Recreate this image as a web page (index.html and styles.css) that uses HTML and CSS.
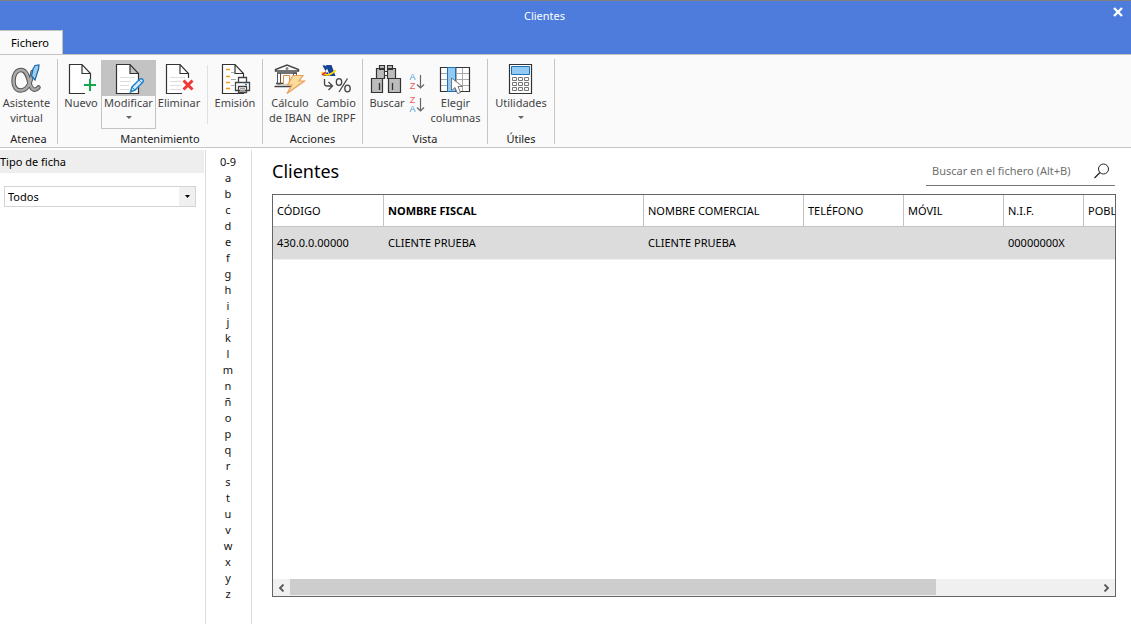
FILE: index.html
```html
<!DOCTYPE html>
<html lang="es">
<head>
<meta charset="utf-8">
<title>Clientes</title>
<link rel="stylesheet" href="styles.css">
</head>
<body>
<div class="window">
  <header class="titlebar">
    <h1 class="window-title">Clientes</h1>
    <button class="close" type="button" aria-label="Cerrar">
      <svg width="10" height="10" viewBox="0 0 10 10"><path d="M1 1l8 8M9 1l-8 8" stroke="#fff" stroke-width="2.4"/></svg>
    </button>
    <button class="tab" type="button">Fichero</button>
  </header>

  <nav class="ribbon" aria-label="Fichero">
    <section class="group">
      <div class="tools">
        <button class="tool wide" type="button">
          <svg width="32" height="32" viewBox="0 0 32 32">
            <g fill="none" stroke-linecap="round">
            <path d="M22.500 9C21 19 17.500 27.500 10.500 27.500C6 27.500 3.500 23.500 3.500 18C3.500 11.500 6.500 7 11 7C16.500 7 18 14 19.500 20C21 26 24.500 29 28.500 24.500" stroke="#555" stroke-width="4.500"/>
            <path d="M22.500 9C21 19 17.500 27.500 10.500 27.500C6 27.500 3.500 23.500 3.500 18C3.500 11.500 6.500 7 11 7C16.500 7 18 14 19.500 20C21 26 24.500 29 28.500 24.500" stroke="#aaa" stroke-width="2.500"/>
            </g>
            <path d="M23 6L25 2.500L29 2L28.500 6L25 17L21.500 13Z" fill="#9dcdf0" stroke="#1769a8" stroke-width="1.200"/>
          </svg>
          <span>Asistente<br>virtual</span>
        </button>
      </div>
      <h2 class="group-name">Atenea</h2>
    </section>

    <section class="group upkeep">
      <div class="tools">
        <button class="tool small" type="button">
          <svg width="32" height="32" viewBox="0 0 32 32">
            <path d="M25.500 17V10.500L17 1.500H4.500V30.500H20M17 1.500V10.500H25.500" fill="#fff" stroke="#333" stroke-width="1.200"/>
            <path d="M25 16v12M19 22h12" stroke="#12a84b" stroke-width="2"/>
          </svg>
          <span>Nuevo</span>
        </button>
        <button class="tool split selected" type="button">
          <svg width="32" height="32" viewBox="0 0 32 32">
            <path d="M3.500 1.500H17L25.500 10.500V30.500H3.500ZM17 1.500V10.500H25.500" fill="#fff" stroke="#333" stroke-width="1.200"/>
            <path d="M7 14.500h15M7 18.500h11M7 22.500h9M7 26.500h9" stroke="#ddd"/>
            <path d="M17.500 29L19 24L27 16Q29 15 30 17Q31 18 29.500 19.500L22 27Z" fill="#d7ecfa" stroke="#2384cb" stroke-width="1.500"/><path d="M19 24l3 3M26 17l3 3" stroke="#2384cb"/>
          </svg>
          <span>Modificar</span>
          <i class="arrow"></i>
        </button>
        <button class="tool medium" type="button">
          <svg width="32" height="32" viewBox="0 0 32 32">
            <path d="M25.500 15V10.500L17 1.500H3.500V30.500H19M17 1.500V10.500H25.500" fill="#fff" stroke="#333" stroke-width="1.200"/>
            <path d="M7 14.500h15M7 18.500h11M7 22.500h11M7 26.500h11" stroke="#ddd"/>
            <path d="M20.500 17.500l9 9M29.500 17.500l-9 9" stroke="#ee3937" stroke-width="3"/>
          </svg>
          <span>Eliminar</span>
        </button>
        <div class="divider"></div>
        <button class="tool medium" type="button">
          <svg width="32" height="32" viewBox="0 0 32 32">
            <path d="M3.500 1.500H16L24.500 10.500V30.500H3.500ZM16 1.500V10.500H24.500" fill="#fff" stroke="#333" stroke-width="1.200"/>
            <path d="M7 6.500h4M7 13.500h4M7 19.500h4M7 25.500h4" stroke="#f39a1d" stroke-width="1.500"/><path d="M12 9.500h3M12 16.500h5M12 22.500h3" stroke="#aaa"/>
            <path d="M16.500 19.500h14v8h-14zM19.500 14.500h8v5h-8zM19.500 23.500h8v6h-8z" fill="#fff" stroke="#444" stroke-width="1.300"/>
            <path d="M21 25.500h5M21 27.500h5" stroke="#999"/><path d="M26 21.500h2" stroke="#2384cb" stroke-width="1.500"/>
          </svg>
          <span>Emisión</span>
        </button>
      </div>
      <h2 class="group-name">Mantenimiento</h2>
    </section>

    <section class="group actions">
      <div class="tools">
        <button class="tool medium" type="button">
          <svg width="32" height="32" viewBox="0 0 32 32">
            <path d="M1.500 8V6.500L13 2L24.500 6.500V8Z" fill="#fff" stroke="#444" stroke-width="1.400"/><circle cx="13" cy="5.500" r="1.500" fill="#888"/>
            <path d="M3 10h20M2 20.500h17M0.500 23.500h17" stroke="#444" stroke-width="1.300"/>
            <path d="M3.500 10v11h3V10M19.500 14V10h3v4" fill="none" stroke="#555"/>
            <path d="M9.500 21V12.500h6V21" fill="#fff" stroke="#e58b38"/>
            <path d="M19 12.500H29L25 18H30.500L13 30.500L18 22H13.500Z" fill="#fbdc9c" stroke="#e8a05c" stroke-width="1.200"/>
          </svg>
          <span>Cálculo<br>de IBAN</span>
        </button>
        <button class="tool medium" type="button">
          <svg width="32" height="32" viewBox="0 0 32 32">
            <path d="M6 2H11.500L15.500 13H10L8 8ZM2.500 2.500Q6 1.500 7.500 5L5.500 8ZM3 13L7.500 9L9.500 13Z" fill="#164394"/>
            <path d="M1.500 9C5 14 12 12 15.500 7" fill="none" stroke="#ffd900" stroke-width="1.600"/><path d="M2 12L6 9" stroke="#e32c27" stroke-width="1.600"/>
            <path d="M4.500 16V20.500Q4.500 23 7 23H11.500M8.500 19L12.500 23L8.500 27" fill="none" stroke="#444" stroke-width="1.300"/>
            <g fill="none" stroke="#444" stroke-width="1.300"><ellipse cx="19" cy="19" rx="2.700" ry="3.300"/><ellipse cx="27.500" cy="25.500" rx="2.700" ry="3.300"/><path d="M27.500 15.500L19 29"/></g>
          </svg>
          <span>Cambio<br>de IRPF</span>
        </button>
      </div>
      <h2 class="group-name">Acciones</h2>
    </section>

    <section class="group view">
      <div class="tools">
        <button class="tool buscar" type="button">
          <svg width="32" height="32" viewBox="0 0 32 32">
            <path d="M9.500 2.500h5v4h-5zM17.500 2.500h5v4h-5zM6.500 5.500h8v10h-8zM17.500 5.500h8v10h-8zM1.500 15.500h11v14h-11zM18.500 15.500h12v14h-12z" fill="#bcbcbc" stroke="#333" stroke-width="1.200"/>
            <path d="M14.500 8.500h3v4h-3z" fill="#fff" stroke="#333"/><path d="M9.500 20v7M22.500 20v7" stroke="#333" stroke-width="1.300"/>
          </svg>
          <span>Buscar</span>
        </button>
        <div class="sorts">
          <button class="sort" type="button" aria-label="Orden ascendente">
            <span class="pair"><b class="blue">A</b><b class="red">Z</b></span>
            <svg width="9" height="18" viewBox="0 0 9 18"><path d="M4.500 2v13M1 11.500L4.500 15L8 11.500" fill="none" stroke="#666" stroke-width="1.200"/></svg>
          </button>
          <button class="sort" type="button" aria-label="Orden descendente">
            <span class="pair"><b class="red">Z</b><b class="blue">A</b></span>
            <svg width="9" height="18" viewBox="0 0 9 18"><path d="M4.500 2v13M1 11.500L4.500 15L8 11.500" fill="none" stroke="#666" stroke-width="1.200"/></svg>
          </button>
        </div>
        <button class="tool wide" type="button">
          <svg width="32" height="32" viewBox="0 0 32 32">
            <path d="M1.500 4.500h29v24h-29z" fill="#fff"/><path d="M2 10.500h28M2 16.500h28M2 22.500h28M17.500 5v23M23.500 5v23" stroke="#aaa"/>
            <path d="M1.500 4.500h29v24h-29z" fill="none" stroke="#333" stroke-width="1.200"/><path d="M8.500 4.500h8v24h-8z" fill="#92caf2" stroke="#1d72b8"/>
            <path d="M12.500 15V27.500L16 24.500L18.500 30.500L21.500 29.500L19 23.500H23.500Z" fill="#fff" stroke="#777"/>
          </svg>
          <span>Elegir<br>columnas</span>
        </button>
      </div>
      <h2 class="group-name">Vista</h2>
    </section>

    <section class="group">
      <div class="tools">
        <button class="tool utilities" type="button">
          <svg width="32" height="32" viewBox="0 0 32 32">
            <path d="M4.500 1.500h22v29h-22z" fill="#fff" stroke="#333" stroke-width="1.200"/><path d="M6.500 3.500h18v8h-18z" fill="#92caf2" stroke="#1d72b8"/>
            <path d="M7.500 14.500h4v3h-4zM13.500 14.500h4v3h-4zM19.500 14.500h4v3h-4zM7.500 19.500h4v3h-4zM13.500 19.500h4v3h-4zM19.500 19.500h4v3h-4zM7.500 24.500h4v3h-4zM13.500 24.500h4v3h-4zM19.500 24.500h4v3h-4z" fill="none" stroke="#777"/>
          </svg>
          <span>Utilidades</span>
          <i class="arrow"></i>
        </button>
      </div>
      <h2 class="group-name">Útiles</h2>
    </section>
  </nav>

  <div class="body">
    <aside class="filters">
      <label class="filter-label" for="tipo">Tipo de ficha</label>
      <div class="combo">
        <select id="tipo"><option>Todos</option></select>
        <span class="combo-arrow"><svg width="5" height="3" viewBox="0 0 5 3"><path d="M0 0h5L2.500 3z"/></svg></span>
      </div>
    </aside>
    <nav class="letters" aria-label="Índice">
      <a href="#0-9">0-9</a><a href="#a">a</a><a href="#b">b</a><a href="#c">c</a><a href="#d">d</a><a href="#e">e</a><a href="#f">f</a><a href="#g">g</a><a href="#h">h</a><a href="#i">i</a><a href="#j">j</a><a href="#k">k</a><a href="#l">l</a><a href="#m">m</a><a href="#n">n</a><a href="#ñ">ñ</a><a href="#o">o</a><a href="#p">p</a><a href="#q">q</a><a href="#r">r</a><a href="#s">s</a><a href="#t">t</a><a href="#u">u</a><a href="#v">v</a><a href="#w">w</a><a href="#x">x</a><a href="#y">y</a><a href="#z">z</a>
    </nav>
    <main class="content">
      <div class="content-head">
        <h2 class="content-title">Clientes</h2>
        <div class="search">
          <input type="text" placeholder="Buscar en el fichero (Alt+B)" aria-label="Buscar en el fichero">
          <button class="search-go" type="button" aria-label="Buscar">
            <svg width="16" height="16" viewBox="0 0 16 16"><circle cx="9.500" cy="6" r="5" fill="none" stroke="#222"/><path d="M6 9.500L0.500 15" stroke="#222" stroke-width="1.200"/></svg>
          </button>
        </div>
      </div>
      <div class="grid">
        <div class="grid-view">
          <table>
            <colgroup><col class="c-code"><col class="c-fiscal"><col class="c-trade"><col class="c-phone"><col class="c-phone"><col class="c-nif"><col class="c-city"></colgroup>
            <thead><tr><th>CÓDIGO</th><th class="sorted">NOMBRE FISCAL</th><th>NOMBRE COMERCIAL</th><th>TELÉFONO</th><th>MÓVIL</th><th>N.I.F.</th><th>POBLACIÓN</th></tr></thead>
            <tbody><tr><td>430.0.0.00000</td><td>CLIENTE PRUEBA</td><td>CLIENTE PRUEBA</td><td></td><td></td><td>00000000X</td><td></td></tr></tbody>
          </table>
        </div>
        <div class="scrollbar">
          <button type="button" aria-label="Izquierda"><svg width="7" height="8" viewBox="0 0 7 8"><path d="M5.500 0.500L2 4l3.500 3.500" fill="none" stroke="#555" stroke-width="1.800"/></svg></button>
          <div class="track"><div class="thumb"></div></div>
          <button type="button" aria-label="Derecha"><svg width="7" height="8" viewBox="0 0 7 8"><path d="M1.500 0.500L5 4L1.500 7.500" fill="none" stroke="#555" stroke-width="1.800"/></svg></button>
        </div>
      </div>
    </main>
  </div>
</div>
</body>
</html>
```

FILE: styles.css
```css
* { box-sizing: border-box; }
html, body { height: 100%; margin: 0; }
body, button, input, select { font-family: "Noto Sans", "Open Sans", sans-serif; font-size: 11px; }
body { background: #fff; color: #000; line-height: 16px; overflow: hidden; }
button { padding: 0; border: 0; background: none; color: inherit; }
h1, h2 { margin: 0; font-weight: 400; font-size: 11px; }
svg { display: block; }

.window { display: flex; flex-direction: column; height: 100%; padding-bottom: 2px; }

.titlebar {
  display: grid;
  grid-template-columns: 63px 1fr 63px;
  grid-template-rows: 29px 24px;
  background: #4d7cdc;
  border-top: 1px solid #808080;
}
.window-title { grid-column: 1 / -1; grid-row: 1; align-self: center; text-align: center; line-height: 29px; padding-right: 42px; color: #fff; }
.close { grid-column: 3; grid-row: 1; justify-self: end; align-self: start; padding: 6px 8px; }
.tab { grid-column: 1; grid-row: 2; background: #fafafa; border-right: 1px solid #c3c3c3; border-top: 1px solid #c3c3c3; padding-right: 2px; }

.ribbon { display: flex; background: #fafafa; border-top: 1px solid #c3c3c3; border-bottom: 1px solid #c6c6c6; margin-left: 0; padding: 4px 0 3px; }
.group { display: flex; flex-direction: column; border-right: 1px solid #c6c6c6; height: 85px; }
.tools { display: flex; height: 74px; padding: 1px 3px 0; }
.group:first-child .tools { padding: 1px 4px 0 0; }
.upkeep .tools { padding-right: 4px; }
.actions .tools { padding-left: 4px; }
.view .tools { padding-right: 5px; }
.group-name { text-align: center; line-height: 11px; color: #222; }
.tool {
  display: flex; flex-direction: column; align-items: center;
  height: 69px; padding-top: 2px; border: 1px solid transparent;
  line-height: 15px; white-space: nowrap; color: #444;
}
.small { width: 40px; }
.medium { width: 46px; }
.wide { width: 53px; }
.split { width: 55px; }
.buscar { width: 42px; }
.wide svg, .buscar svg { margin-right: 2px; }
.utilities { width: 60px; }
.selected { border-color: #c3c3c3; background: linear-gradient(#c3c3c3 35px, #fafafa 35px); }
.arrow { margin-top: 6px; border: 3px solid transparent; border-top-color: #666; border-bottom: 0; }
.divider { width: 1px; height: 59px; margin: 5px 4px 0 5px; background: #e0e0e0; }
.sorts { display: flex; flex-direction: column; gap: 5px; padding: 13px 4px 0 1px; }
.sort { display: flex; width: 16px; }
.pair { display: flex; flex-direction: column; width: 7px; font-family: "Liberation Sans", sans-serif; font-size: 9px; line-height: 9px; }
.pair b { font-weight: 400; }
.blue { color: #4b9fd8; }
.red { color: #ec5a58; }

.body { display: flex; flex: 1; min-height: 0; }
.filters { width: 206px; border-right: 1px solid #dcdcdc; margin-top: 2px; }
.filter-label { display: block; margin-right: 1px; background: #eee; line-height: 23px; }
.combo { display: flex; height: 21px; margin: 13px 9px 0 4px; border: 1px solid #d4d4d4; position: relative; }
.combo select { flex: 1; appearance: none; border: 0; padding: 0 3px; background: #fff; color: #000; }
.combo-arrow { position: absolute; right: 0; top: 0; bottom: 0; width: 16px; display: grid; place-items: center; background: #f0f0f0; pointer-events: none; }

.letters { width: 46px; margin-top: 2px; padding: 4px 1px 0 0; border-right: 1px solid #dcdcdc; display: flex; flex-direction: column; align-items: center; }
.letters a { color: #111; text-decoration: none; line-height: 16px; }

.content { flex: 1; min-width: 0; display: flex; flex-direction: column; padding: 8px 15px 27px 20px; }
.content-head { display: flex; justify-content: space-between; height: 30px; margin-bottom: 8px; }
.content-title { font-size: 18px; line-height: 30px; }
.search { display: flex; align-items: center; width: 189px; margin-right: 1px; border-bottom: 1px solid #777; }
.search input { flex: 1; min-width: 0; border: 0; outline: 0; padding: 0 6px; background: none; }
.search input::placeholder { color: #707070; opacity: 1; }
.search-go { padding-right: 5px; }

.grid { flex: 1; min-height: 0; display: flex; flex-direction: column; border: 1px solid #646464; }
.grid-view { flex: 1; overflow: hidden; }
table { width: 930px; table-layout: fixed; border-collapse: separate; border-spacing: 0; }
.c-code { width: 111px; }
.c-fiscal { width: 260px; }
.c-trade { width: 160px; }
.c-phone { width: 100px; }
.c-nif { width: 80px; }
th, td { height: 32px; padding: 0 4px; text-align: left; font-weight: 400; white-space: nowrap; }
th { border-right: 1px solid #c3c3c3; border-bottom: 1px solid #c3c3c3; }
th.sorted { font-weight: 700; }
td { height: 33px; background: #dcdcdc; border-bottom: 1px solid #f0f0f0; }
.scrollbar { display: flex; height: 17px; background: #f0f0f0; }
.scrollbar button { width: 17px; display: grid; place-items: center; }
.track { flex: 1; padding-bottom: 1px; }
.thumb { width: 80%; height: 100%; background: #cdcdcd; }
```
